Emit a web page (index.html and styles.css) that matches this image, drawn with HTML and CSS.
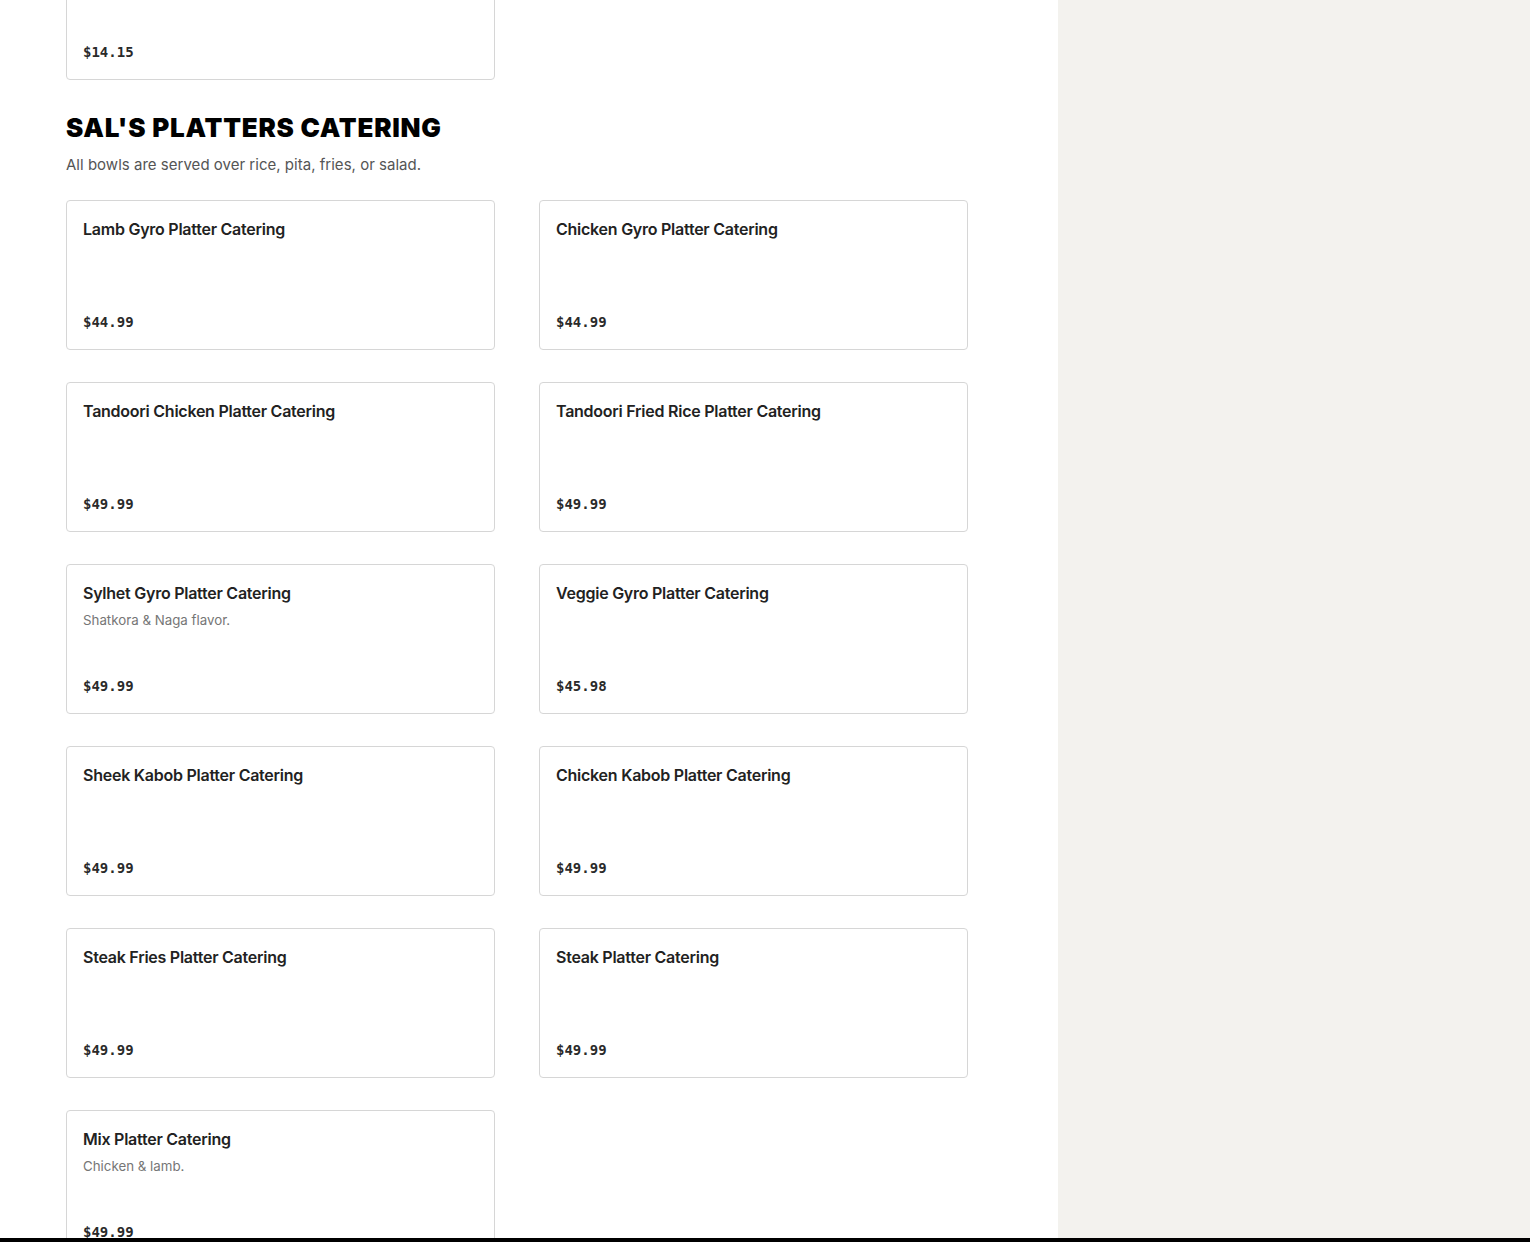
FILE: index.html
```html
<!DOCTYPE html>
<html lang="en">
<head>
<meta charset="utf-8">
<title>Sal's Platters Catering</title>
<link rel="stylesheet" href="styles.css">
</head>
<body>
<div class="page">
  <main class="main">
    <div class="grid prev">
      <div class="card">
        <div class="name"></div>
        <div class="price">$14.15</div>
      </div>
    </div>
    <section class="section">
      <h2 class="heading">SAL'S PLATTERS CATERING</h2>
      <p class="sub">All bowls are served over rice, pita, fries, or salad.</p>
      <div class="grid">
        <div class="card"><div class="name">Lamb Gyro Platter Catering</div><div class="price">$44.99</div></div>
        <div class="card"><div class="name">Chicken Gyro Platter Catering</div><div class="price">$44.99</div></div>
        <div class="card"><div class="name">Tandoori Chicken Platter Catering</div><div class="price">$49.99</div></div>
        <div class="card"><div class="name">Tandoori Fried Rice Platter Catering</div><div class="price">$49.99</div></div>
        <div class="card"><div class="name">Sylhet Gyro Platter Catering</div><div class="desc">Shatkora &amp; Naga flavor.</div><div class="price">$49.99</div></div>
        <div class="card"><div class="name">Veggie Gyro Platter Catering</div><div class="price">$45.98</div></div>
        <div class="card"><div class="name">Sheek Kabob Platter Catering</div><div class="price">$49.99</div></div>
        <div class="card"><div class="name">Chicken Kabob Platter Catering</div><div class="price">$49.99</div></div>
        <div class="card"><div class="name">Steak Fries Platter Catering</div><div class="price">$49.99</div></div>
        <div class="card"><div class="name">Steak Platter Catering</div><div class="price">$49.99</div></div>
        <div class="card"><div class="name">Mix Platter Catering</div><div class="desc">Chicken &amp; lamb.</div><div class="price">$49.99</div></div>
      </div>
    </section>
  </main>
  <aside class="side"></aside>
</div>
<div class="bottombar"></div>
</body>
</html>
```

FILE: styles.css
```css
html, body {
  margin: 0;
  padding: 0;
}
body {
  font-family: Inter, "Noto Sans", sans-serif;
  color: #191919;
  background: #fff;
  overflow: hidden;
  height: 1242px;
}
.page {
  display: flex;
  min-height: 1242px;
}
.main {
  width: 1058px;
  box-sizing: border-box;
  padding-left: 66px;
  margin-top: -70px;
  background: #fff;
}
.side {
  flex: 1;
  background: #f3f2ee;
}
.grid {
  display: grid;
  grid-template-columns: 429px 429px;
  column-gap: 44px;
  row-gap: 32px;
}
.card {
  box-sizing: border-box;
  height: 150px;
  border: 1px solid #d6d6d6;
  border-radius: 4px;
  padding: 16px 16px 17px;
  display: flex;
  flex-direction: column;
  background: #fff;
}
.name {
  font-size: 16px;
  line-height: 24px;
  font-weight: 600;
  letter-spacing: -0.25px;
  color: #222;
}
.desc {
  margin-top: 4px;
  font-size: 13.3px;
  line-height: 22px;
  color: #767676;
}
.price {
  margin-top: auto;
  font-family: "DejaVu Sans Mono", "Liberation Mono", monospace;
  font-size: 14px;
  line-height: 20px;
  font-weight: 700;
  color: #2a2a2a;
}
.section {
  padding-top: 32px;
}
.heading {
  margin: 0;
  font-family: Inter, sans-serif;
  font-weight: 900;
  font-size: 26px;
  line-height: 32px;
  color: #000;
  letter-spacing: 0.75px;
}
.sub {
  margin: 9px 0 23px;
  font-size: 15px;
  line-height: 24px;
  letter-spacing: 0.02px;
  color: #555;
}
.bottombar {
  position: fixed;
  left: 0;
  right: 0;
  bottom: 0;
  height: 4px;
  background: #000;
}
```
